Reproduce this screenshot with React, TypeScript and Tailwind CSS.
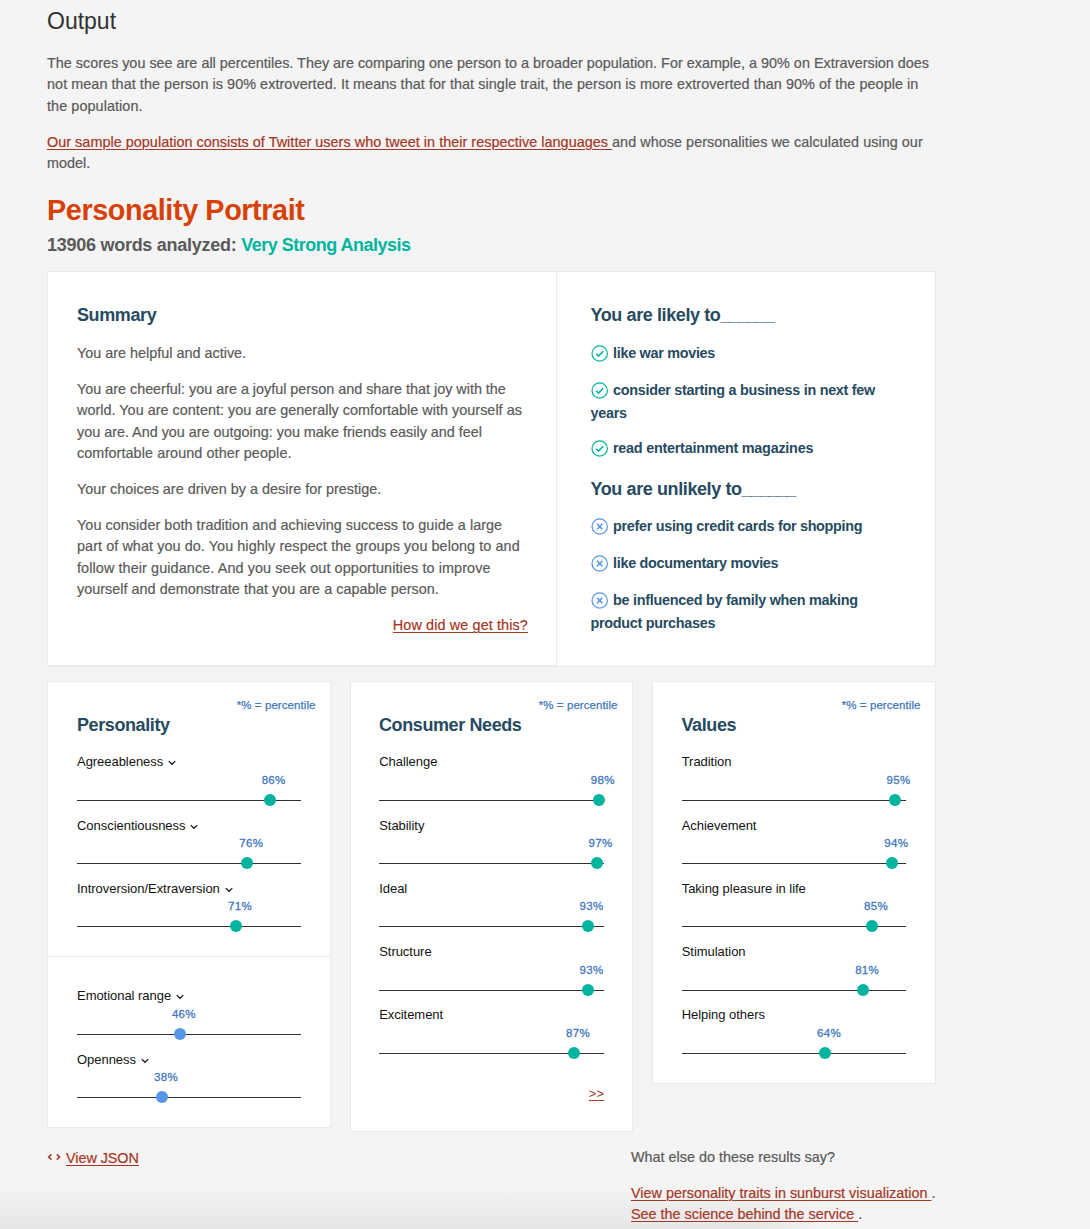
import React from "react";

const GREEN = "#00b4a0";
const BLUE = "#5596e6";

type Trait = { name: string; value: number; more?: boolean };
type Line = { text: string; tracking?: number };

const personalityHigh: Trait[] = [
  { name: "Agreeableness", value: 86, more: true },
  { name: "Conscientiousness", value: 76, more: true },
  { name: "Introversion/Extraversion", value: 71, more: true },
];
const personalityLow: Trait[] = [
  { name: "Emotional range", value: 46, more: true },
  { name: "Openness", value: 38, more: true },
];
const needs: Trait[] = [
  { name: "Challenge", value: 98 },
  { name: "Stability", value: 97 },
  { name: "Ideal", value: 93 },
  { name: "Structure", value: 93 },
  { name: "Excitement", value: 87 },
];
const values: Trait[] = [
  { name: "Tradition", value: 95 },
  { name: "Achievement", value: 94 },
  { name: "Taking pleasure in life", value: 85 },
  { name: "Stimulation", value: 81 },
  { name: "Helping others", value: 64 },
];

function Lines({ lines }: { lines: Line[] }) {
  return (
    <>
      {lines.map((line, i) => (
        <React.Fragment key={i}>
          {i > 0 && <br />}
          <span style={{ letterSpacing: line.tracking ? `${line.tracking}px` : undefined }}>{line.text}</span>
        </React.Fragment>
      ))}
    </>
  );
}

function TraitRow({ trait, color }: { trait: Trait; color: string }) {
  return (
    <div className="h-[63.3px] w-[224.4px]">
      <div className="-mb-[0.4px] flex h-[18.4px] items-center gap-[5px] pt-[0.4px] text-[13px] leading-[18px] tracking-[-0.04px] text-[#121212]">
        <span>{trait.name}</span>
        {trait.more && (
          <svg className="mt-[2px] h-[6px] w-[8px]" viewBox="0 0 8 6" fill="none" stroke="#121212" strokeWidth="1.2">
            <path d="M0.7 1.1 4 4.3 7.3 1.1" />
          </svg>
        )}
      </div>
      <div className="relative h-[30px]">
        <div
          className="absolute top-px -ml-[8.3px] text-[11.5px] leading-[16px] tracking-[0.3px] text-[#4178be] [-webkit-text-stroke:0.3px_#4178be]"
          style={{ left: `${trait.value}%` }}
        >
          {trait.value}%
        </div>
        <div className="absolute top-[29px] h-px w-full bg-[#323232]" />
        <div
          className="absolute top-[23px] -ml-[6.2px] size-[12px] rounded-full"
          style={{ left: `${trait.value}%`, backgroundColor: color }}
        />
      </div>
    </div>
  );
}

function Heading({ children, className = "" }: { children: React.ReactNode; className?: string }) {
  return (
    <h3 className={`text-[18px] leading-[27px] font-bold tracking-[-0.4px] text-[#264a60] ${className}`}>
      {children}
    </h3>
  );
}

function Blank() {
  return <span className="tracking-[-1.1px]">______</span>;
}

function Column({ title, height, indent, children }: { title: string; height: string; indent: string; children: React.ReactNode }) {
  return (
    <section className={`border border-[#eaeaea] bg-white ${height}`}>
      <div className="mt-[15px] pr-[14.5px] text-right text-[11.5px] leading-[16px] tracking-[0.07px] text-[#4178be] [-webkit-text-stroke:0.25px_#4178be]">
        *% = percentile
      </div>
      <div className={indent}>
        <Heading className="-mt-[1.5px]">{title}</Heading>
      </div>
      <div className="pt-[14.1px]">{children}</div>
    </section>
  );
}

function Tendency({ kind, lines, last }: { kind: "yes" | "no"; lines: Line[]; last?: boolean }) {
  const color = kind === "yes" ? GREEN : BLUE;
  return (
    <p
      className={`text-[14.4px] leading-[23px] font-bold tracking-[-0.29px] text-[#264a60] ${last ? "" : "mb-[14px]"}`}
    >
      <svg
        className="mr-[5px] ml-[0.5px] inline-block size-[17px] align-[-4px]"
        viewBox="0 0 17 17"
        fill="none"
        stroke={color}
      >
        <circle cx="8.7" cy="8.5" r="7.7" strokeWidth="1.2" />
        {kind === "yes" ? (
          <path d="M5.2 8.8 7.4 11 12.2 6.3" strokeWidth="1.6" />
        ) : (
          <path d="M6 5.8 11.4 11.2M11.4 5.8 6 11.2" strokeWidth="1.6" />
        )}
      </svg>
      <Lines lines={lines} />
    </p>
  );
}

const plainLink = "text-[#a53725] underline underline-offset-[2px] decoration-1";
const link =
  "text-[#a53725] underline underline-offset-[2px] decoration-1 [-webkit-text-stroke:0.2px_#a53725]";

export default function App() {
  return (
    <main className="h-[1229px] w-[1090px] overflow-hidden bg-[linear-gradient(to_right,transparent_760px,#f4f4f4_825px),linear-gradient(to_bottom,#f4f4f4_1185px,#e6e6e6_1229px)] pl-[47px] font-['Liberation_Sans',Helvetica,Arial,sans-serif] text-[14.4px] leading-[21.4px] whitespace-nowrap text-[#5a5a5a] [-webkit-text-stroke:0.2px_#5a5a5a]">
      <h2 className="pt-[6px] text-[23px] leading-[30px] text-[#323232] [-webkit-text-stroke:0]">Output</h2>
      <p className="mt-[16.8px]">
        <Lines
          lines={[
            {
              text: "The scores you see are all percentiles. They are comparing one person to a broader population. For example, a 90% on Extraversion does",
            },
            {
              text: "not mean that the person is 90% extroverted. It means that for that single trait, the person is more extroverted than 90% of the people in",
              tracking: 0.06,
            },
            { text: "the population.", tracking: 0.08 },
          ]}
        />
      </p>
      <p className="mt-[14.6px]">
        <a className={`${link} tracking-[0.034px]`}>
          Our sample population consists of Twitter users who tweet in their respective languages{" "}
        </a>
        <span className="tracking-[0.04px]">and whose personalities we calculated using our</span>
        <br />
        model.
      </p>
      <div className="[-webkit-text-stroke:0]">
        <h1 className="mt-[17px] text-[28.8px] leading-[38px] font-bold tracking-[-0.41px] text-[#d74108]">
          Personality Portrait
        </h1>
        <h3 className="mt-[3px] text-[18px] leading-[27px] font-bold tracking-[-0.27px]">
          13906 words analyzed: <span className="tracking-[-0.5px] text-[#00b4a0]">Very Strong Analysis</span>
        </h3>
      </div>

      <section className="mt-[11.8px] flex h-[396px] w-[889px] border border-[#eaeaea] bg-white">
        <div className="h-[394px] w-[509px] border-r border-b border-[#eaeaea] pt-[30px] pl-[29px]">
          <Heading className="[-webkit-text-stroke:0]">Summary</Heading>
          <p className="mt-[13.7px]">You are helpful and active.</p>
          <p className="mt-[14.6px]">
            <Lines
              lines={[
                { text: "You are cheerful: you are a joyful person and share that joy with the", tracking: -0.015 },
                { text: "world. You are content: you are generally comfortable with yourself as", tracking: 0.025 },
                { text: "you are. And you are outgoing: you make friends easily and feel", tracking: -0.01 },
                { text: "comfortable around other people.", tracking: 0.08 },
              ]}
            />
          </p>
          <p className="mt-[14.6px]">Your choices are driven by a desire for prestige.</p>
          <p className="mt-[14.5px]">
            <Lines
              lines={[
                { text: "You consider both tradition and achieving success to guide a large", tracking: 0.05 },
                { text: "part of what you do. You highly respect the groups you belong to and", tracking: 0.075 },
                { text: "follow their guidance. And you seek out opportunities to improve", tracking: 0.1 },
                { text: "yourself and demonstrate that you are a capable person.", tracking: 0.02 },
              ]}
            />
          </p>
          <p className="mt-[14.5px] pr-[28px] text-right">
            <a className={`${link} tracking-[0.12px]`}>How did we get this?</a>
          </p>
        </div>
        <div className="pt-[30px] pl-[33.5px] [-webkit-text-stroke:0]">
          <Heading className="mb-[13px]">
            You are likely to
            <Blank />
          </Heading>
          <Tendency kind="yes" lines={[{ text: "like war movies" }]} />
          <Tendency kind="yes" lines={[{ text: "consider starting a business in next few" }, { text: "years" }]} />
          <div className="-mt-[2px]">
            <Tendency kind="yes" lines={[{ text: "read entertainment magazines", tracking: -0.25 }]} last />
          </div>
          <Heading className="mt-[16px] mb-[11.5px]">
            You are unlikely to
            <Blank />
          </Heading>
          <Tendency kind="no" lines={[{ text: "prefer using credit cards for shopping", tracking: -0.3 }]} />
          <Tendency kind="no" lines={[{ text: "like documentary movies" }]} />
          <Tendency
            kind="no"
            lines={[{ text: "be influenced by family when making", tracking: -0.27 }, { text: "product purchases" }]}
            last
          />
        </div>
      </section>

      <div className="mt-[14px] grid w-[889px] grid-cols-[284px_283px_284px] items-start gap-x-[19px] [-webkit-text-stroke:0]">
        <Column title="Personality" height="h-[447px]" indent="pl-[29px]">
          <div className="h-[204px] border-b border-[#eaeaea] pl-[29px]">
            {personalityHigh.map((t) => (
              <TraitRow key={t.name} trait={t} color={GREEN} />
            ))}
          </div>
          <div className="pt-[30.2px] pl-[29px]">
            {personalityLow.map((t) => (
              <TraitRow key={t.name} trait={t} color={BLUE} />
            ))}
          </div>
        </Column>
        <Column title="Consumer Needs" height="h-[451px]" indent="pl-[28px]">
          <div className="pl-[28.2px]">
            {needs.map((t) => (
              <TraitRow key={t.name} trait={t} color={GREEN} />
            ))}
          </div>
          <div className="mt-[14px] pr-[28px] text-right text-[13px]">
            <a className={plainLink}>&gt;&gt;</a>
          </div>
        </Column>
        <Column title="Values" height="h-[403px]" indent="pl-[28.5px]">
          <div className="pl-[28.7px]">
            {values.map((t) => (
              <TraitRow key={t.name} trait={t} color={GREEN} />
            ))}
          </div>
        </Column>
      </div>

      <footer className="mt-[14.8px] flex w-[889px] justify-between">
        <div className="mt-[0.7px] flex h-[22px] items-center gap-[4px]">
          <svg className="-mt-[3px] h-[8px] w-[15px]" viewBox="0 0 15 8" fill="none" stroke="#a53725" strokeWidth="1.5">
            <path d="M4.4 1.4 1.6 4 4.4 6.6M9.8 1.4 12.6 4 9.8 6.6" />
          </svg>
          <a className={`${link} tracking-[-0.05px]`}>View JSON</a>
        </div>
        <div className="w-[305px]">
          <p>What else do these results say?</p>
          <p className="mt-[14.5px]">
            <a className={link}>View personality traits in sunburst visualization </a>.
            <br />
            <a className={link}>See the science behind the service </a>.
          </p>
        </div>
      </footer>
    </main>
  );
}
